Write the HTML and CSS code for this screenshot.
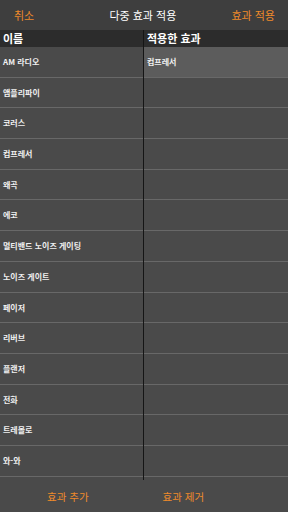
FILE: index.html
```html
<!DOCTYPE html>
<html lang="ko">
<head>
    <meta charset="UTF-8">
    <meta name="viewport" content="width=device-width, initial-scale=1.0">
    <title>다중 효과 적용</title>
    <link rel="stylesheet" href="styles.css">
</head>
<body>
    <header class="topbar">
        <span class="action">취소</span>
        <span class="title">다중 효과 적용</span>
        <span class="action">효과 적용</span>
    </header>

    <div id="lists">
        <div class="column left">
            <div class="col-head">이름</div>
            <div class="row">AM 라디오</div>
            <div class="row">앰플리파이</div>
            <div class="row">코러스</div>
            <div class="row">컴프레서</div>
            <div class="row">왜곡</div>
            <div class="row">에코</div>
            <div class="row">멀티밴드 노이즈 게이팅</div>
            <div class="row">노이즈 게이트</div>
            <div class="row">페이저</div>
            <div class="row">리버브</div>
            <div class="row">플랜저</div>
            <div class="row">전화</div>
            <div class="row">트레몰로</div>
            <div class="row">와-와</div>
        </div>
        <div class="column right">
            <div class="col-head">적용한 효과</div>
            <div class="row selected">컴프레서</div>
            <div class="row"></div>
            <div class="row"></div>
            <div class="row"></div>
            <div class="row"></div>
            <div class="row"></div>
            <div class="row"></div>
            <div class="row"></div>
            <div class="row"></div>
            <div class="row"></div>
            <div class="row"></div>
            <div class="row"></div>
            <div class="row"></div>
            <div class="row"></div>
        </div>
    </div>

    <footer class="bottombar">
        <span class="action">효과 추가</span>
        <span class="action">효과 제거</span>
    </footer>
</body>
</html>
```

FILE: styles.css
```css
body {
    margin: 0;
    width: 288px;
    height: 512px;
    font-family: 'Noto Sans CJK KR', 'Noto Sans', sans-serif;
    background-color: #4a4a4a;
    color: #f2f2f2;
    display: flex;
    flex-direction: column;
    overflow: hidden;
}

.topbar {
    height: 30px;
    background-color: #3e3e3e;
    display: flex;
    justify-content: space-between;
    align-items: center;
    padding: 0 13px 0 14px;
    font-size: 11px;
}

.title {
    color: #ffffff;
    padding-left: 20px;
}

.action {
    color: #ef8a2a;
}

#lists {
    display: flex;
    height: 450px;
}

.column {
    display: flex;
    flex-direction: column;
}

.left {
    width: 143px;
    border-right: 1px solid #151515;
}

.right {
    flex: 1;
}

.col-head {
    height: 17px;
    line-height: 16px;
    background-color: #2c2c2c;
    font-size: 11px;
    font-weight: bold;
    color: #ffffff;
    padding-left: 3px;
}

.row {
    height: 29.7px;
    line-height: 29px;
    border-bottom: 1px solid #686868;
    font-size: 8px;
    font-weight: bold;
    color: #f0f0f0;
    padding-left: 3px;
    white-space: nowrap;
}

.selected {
    background-color: #5c5c5c;
}

.bottombar {
    flex: 1;
    display: flex;
    align-items: center;
    gap: 74px;
    padding-left: 47px;
    font-size: 10.5px;
}
```
